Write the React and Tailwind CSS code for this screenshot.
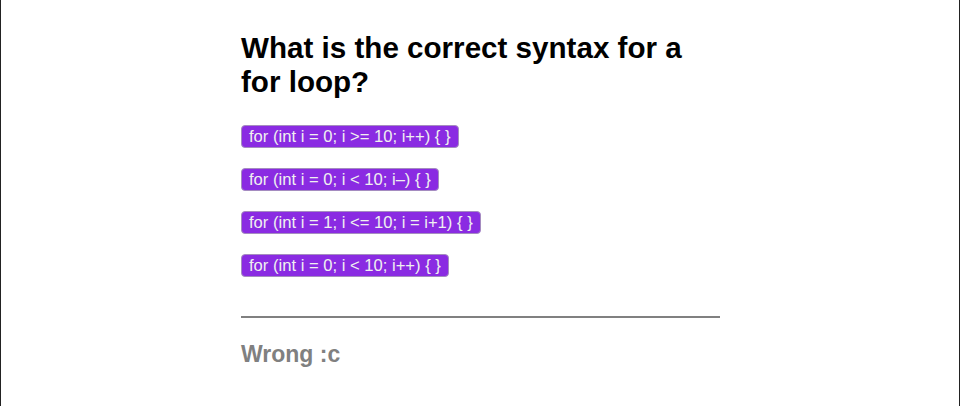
const answers = [
  'for (int i = 0; i >= 10; i++) { }',
  'for (int i = 0; i < 10; i–) { }',
  'for (int i = 1; i <= 10; i = i+1) { }',
  'for (int i = 0; i < 10; i++) { }',
];

export default function App() {
  return (
    <div className="min-h-[406px] bg-white border-x border-[#222] font-['Liberation_Sans',Arial,sans-serif]">
      <div className="w-[480px] mx-auto pl-px pt-[31px]">
        <h1 className="text-[29.6px] leading-[34px] font-bold text-black pr-[10px]">
          What is the correct syntax for a for loop?
        </h1>

        {/* answer buttons */}
        <div className="flex flex-col items-start gap-[20px] mt-[26px]">
          {answers.map((a) => (
            <button
              key={a}
              type="button"
              className="bg-[#8a2be2] text-[#f0f0f0] text-[16.6px] leading-[19px] px-[7px] py-[1px] border border-[#a58cc0] rounded-[4px]"
            >
              {a}
            </button>
          ))}
        </div>

        <hr className="mt-[39px] border-t-2 border-[#808080]" />

        <p className="mt-[23px] text-[23px] leading-[26px] font-bold text-[#808080]">Wrong :c</p>
      </div>
    </div>
  );
}
